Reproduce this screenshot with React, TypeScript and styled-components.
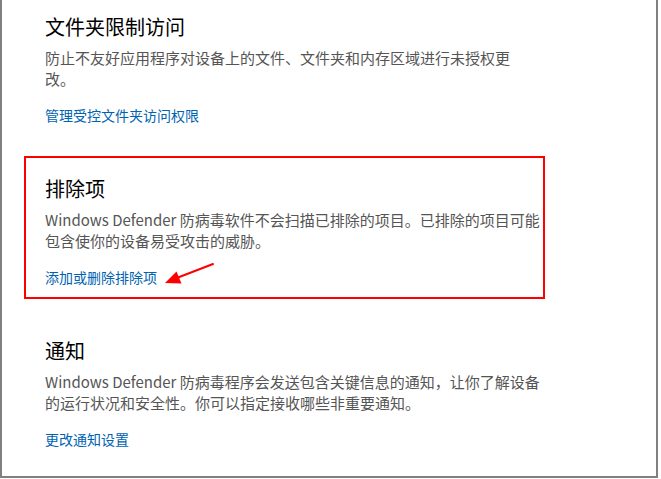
import React from 'react';
import styled, { createGlobalStyle } from 'styled-components';

type Item = {
  title: string;
  lines: string[];
  link: string;
  marked?: boolean;
};

const items: Item[] = [
  {
    title: '文件夹限制访问',
    lines: ['防止不友好应用程序对设备上的文件、文件夹和内存区域进行未授权更', '改。'],
    link: '管理受控文件夹访问权限',
  },
  {
    title: '排除项',
    lines: ['Windows Defender 防病毒软件不会扫描已排除的项目。已排除的项目可能', '包含使你的设备易受攻击的威胁。'],
    link: '添加或删除排除项',
    marked: true,
  },
  {
    title: '通知',
    lines: ['Windows Defender 防病毒程序会发送包含关键信息的通知，让你了解设备', '的运行状况和安全性。你可以指定接收哪些非重要通知。'],
    link: '更改通知设置',
  },
];

const Arrow = () => (
  <ArrowSvg width="54" height="30" viewBox="0 0 54 30">
    <line x1="49" y1="4" x2="14" y2="17.5" stroke="#f00" strokeWidth="2" strokeLinecap="round" />
    <polygon points="1,23 17.5,23.5 12.5,11.5" fill="#f00" />
  </ArrowSvg>
);

export default function App() {
  return (
    <>
      <GlobalStyle />
      <Frame>
        <List>
          {items.map((x) => {
            return (
              <Section $marked={x.marked} key={x.title}>
                <Title>{x.title}</Title>
                <Desc>
                  {x.lines.map((l, i) => (
                    <Line key={i}>{l}</Line>
                  ))}
                </Desc>
                <Link href="#">{x.link}</Link>
                {x.marked && <Arrow />}
              </Section>
            );
          })}
        </List>
      </Frame>
    </>
  );
}

const GlobalStyle = createGlobalStyle`
  html, body {
    margin: 0;
    padding: 0;
    background: #fff;
  }
  body {
    font-family: 'Noto Sans CJK SC', sans-serif;
  }
`;

const Frame = styled.div`
  width: 658px;
  height: 478px;
  box-sizing: border-box;
  border-left: 2px solid #808080;
  border-right: 2px solid #808080;
  border-bottom: 2px solid #808080;
  background: #fff;
  overflow: hidden;
`;

const List = styled.div`
  display: flex;
  flex-direction: column;
  gap: 19px;
  margin-top: -6px;
`;

const Section = styled.section<{ $marked?: boolean }>`
  position: relative;
  display: flex;
  flex-direction: column;
  align-items: flex-start;
  width: 521px;
  box-sizing: border-box;
  margin-left: 22px;
  padding: 17px 0 10px 19px;
  border: 2px solid ${(p) => (p.$marked ? '#ff0000' : 'transparent')};
`;

const Title = styled.h2`
  margin: 0;
  font-size: 20px;
  line-height: 28px;
  font-weight: 400;
  color: #000;
`;

const Desc = styled.p`
  margin: 6px 0 0;
  font-size: 15px;
  line-height: 21px;
  color: #555;
`;

const Line = styled.span`
  display: block;
  white-space: nowrap;
`;

const Link = styled.a`
  margin-top: 16px;
  font-size: 14px;
  line-height: 20px;
  color: #0063b1;
  text-decoration: none;
`;

const ArrowSvg = styled.svg`
  position: absolute;
  left: 138px;
  top: 102px;
`;
